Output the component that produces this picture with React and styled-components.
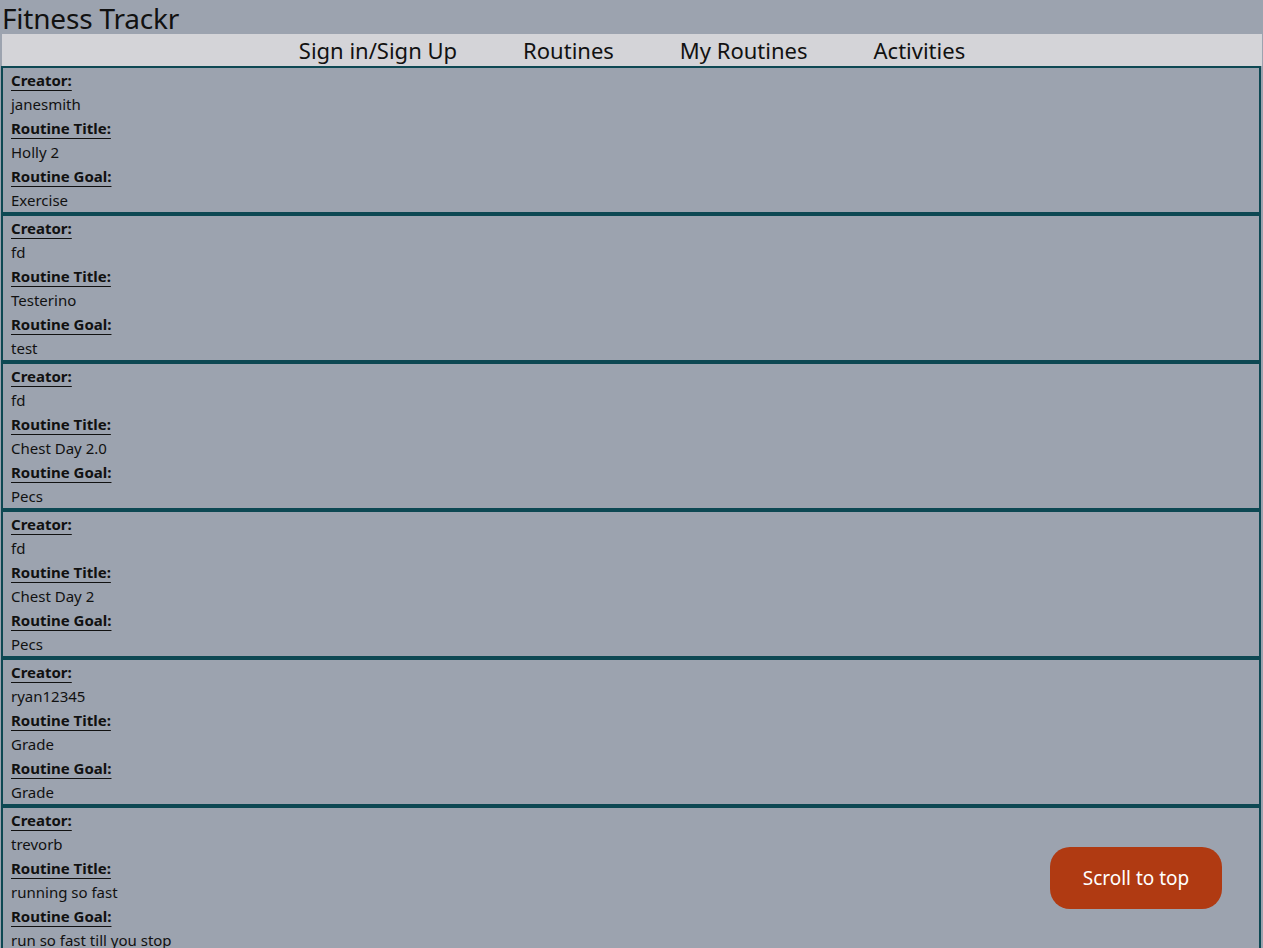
import React from 'react'
import styled, { createGlobalStyle } from 'styled-components'

const routines = [
    { creator: 'janesmith', title: 'Holly 2', goal: 'Exercise' },
    { creator: 'fd', title: 'Testerino', goal: 'test' },
    { creator: 'fd', title: 'Chest Day 2.0', goal: 'Pecs' },
    { creator: 'fd', title: 'Chest Day 2', goal: 'Pecs' },
    { creator: 'ryan12345', title: 'Grade', goal: 'Grade' },
    { creator: 'trevorb', title: 'running so fast', goal: 'run so fast till you stop' },
]

const GlobalStyle = createGlobalStyle`
    body{
        margin:0;
        background:#9ca3af;
        font-family:"Noto Sans", "Open Sans", sans-serif;
        color:#111;
    }
`

const App = () => {
    const scrollTop = () => window.scrollTo({ top: 0, behavior: 'smooth' })
    return (
        <Page>
            <GlobalStyle />
            <Title>Fitness Trackr</Title>
            <NavBar>
                <NavLink>Sign in/Sign Up</NavLink>
                <NavLink>Routines</NavLink>
                <NavLink>My Routines</NavLink>
                <NavLink>Activities</NavLink>
            </NavBar>
            <List>
                {routines.map((r, i) => (
                    <Card key={i}>
                        <Label>Creator:</Label>
                        <Value>{r.creator}</Value>
                        <Label>Routine Title:</Label>
                        <Value>{r.title}</Value>
                        <Label>Routine Goal:</Label>
                        <Value>{r.goal}</Value>
                    </Card>
                ))}
            </List>
            <TopButton onClick={scrollTop}>Scroll to top</TopButton>
        </Page>
    )
}

export default App

const Page = styled.div`
    min-height:100vh;
`

const Title = styled.h1`
    margin:0;
    padding-left:2px;
    height:34px;
    font-size:28px;
    font-weight:400;
    line-height:36px;
    letter-spacing:-0.2px;
`

const NavBar = styled.nav`
    display:flex;
    justify-content:center;
    align-items:center;
    gap:66px;
    height:32px;
    margin-left:2px;
    margin-right:1px;
    background:#d4d4d8;
`

const NavLink = styled.a`
    font-size:22px;
    line-height:36px;
    color:#111;
    cursor:pointer;
`

const List = styled.div`
    display:flex;
    flex-direction:column;
    margin:0 2px 0 1px;
`

const Card = styled.div`
    display:flex;
    flex-direction:column;
    align-items:flex-start;
    padding:0 8px;
    height:148px;
    box-sizing:border-box;
    border:2px solid #0d4853;
`

const Label = styled.div`
    font-size:15px;
    font-weight:700;
    line-height:24px;
    text-decoration:underline;
    text-underline-offset:4px;
`

const Value = styled.div`
    font-size:15px;
    line-height:24px;
`

const TopButton = styled.button`
    position:fixed;
    right:41px;
    bottom:39px;
    width:172px;
    height:62px;
    border:none;
    border-radius:20px;
    background:#b03a12;
    color:#fff;
    font-family:"Noto Sans", "Open Sans", sans-serif;
    font-size:19px;
    cursor:pointer;
`
